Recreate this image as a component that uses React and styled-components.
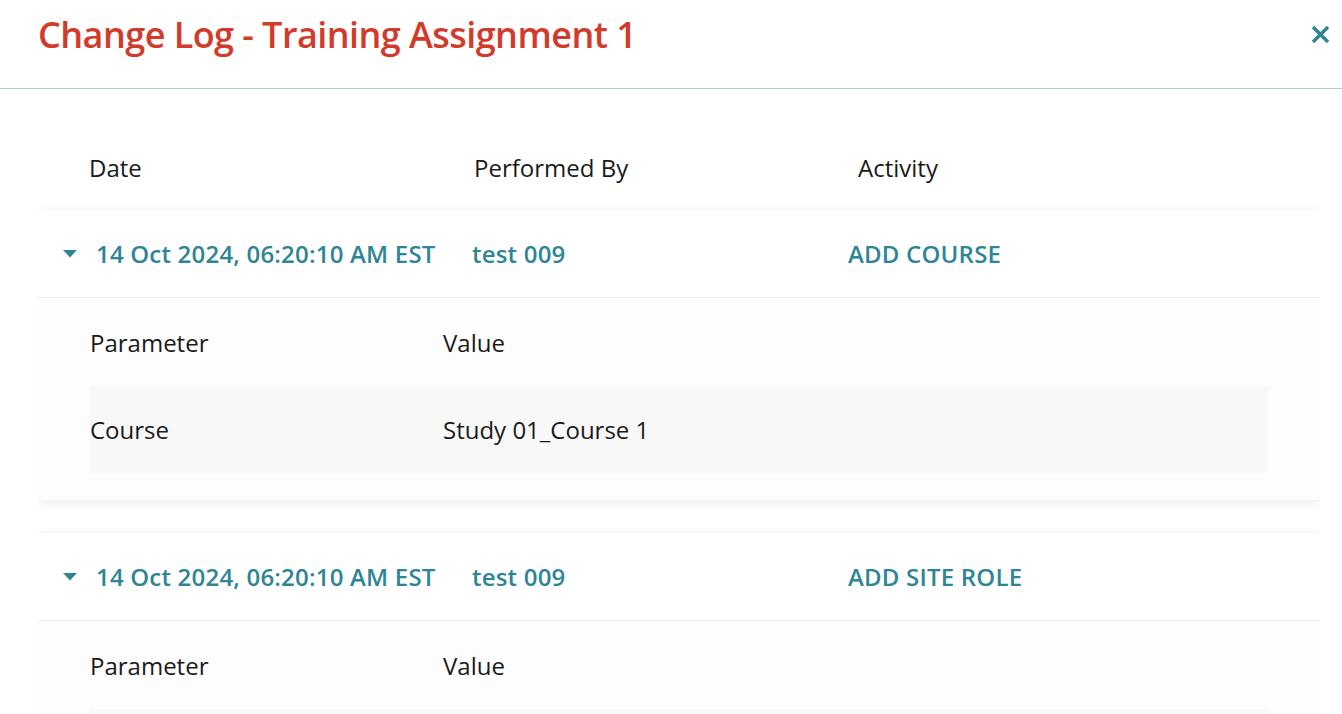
import React from "react";
import styled, { createGlobalStyle } from "styled-components";

const GlobalStyle = createGlobalStyle`
  body {
    margin: 0;
    background: #fff;
    font-family: "Open Sans", "Noto Sans", sans-serif;
    overflow: hidden;
  }
`;

const logs = [
  {
    id: 1,
    date: "14 Oct 2024, 06:20:10 AM EST",
    by: "test 009",
    activity: "ADD COURSE",
    params: [{ name: "Course", value: "Study 01_Course 1" }],
  },
  {
    id: 2,
    date: "14 Oct 2024, 06:20:10 AM EST",
    by: "test 009",
    activity: "ADD SITE ROLE",
    params: [{ name: "Site Role", value: "Site Coordinator" }],
  },
];

const Caret = () => (
  <svg width="14" height="8" viewBox="0 0 14 8">
    <path d="M0 0 L14 0 L7 7.5 Z" fill="currentColor" />
  </svg>
);

const CloseIcon = () => (
  <svg width="19" height="19" viewBox="0 0 19 19">
    <path
      d="M2 2 L17 17 M17 2 L2 17"
      stroke="currentColor"
      strokeWidth="3.4"
      strokeLinecap="butt"
    />
  </svg>
);

const App = () => {
  return (
    <Modal>
      <GlobalStyle />
      <Header>
        <Title>Change Log - Training Assignment 1</Title>
        <CloseButton aria-label="Close">
          <CloseIcon />
        </CloseButton>
      </Header>
      <Body>
        <ColumnHeader>
          <span>Date</span>
          <span>Performed By</span>
          <span>Activity</span>
        </ColumnHeader>
        {logs.map((log) => (
          <LogCard key={log.id}>
            <LogRow>
              <CaretCell>
                <Caret />
              </CaretCell>
              <span>{log.date}</span>
              <span>{log.by}</span>
              <span>{log.activity}</span>
            </LogRow>
            <Details>
              <ParamRow>
                <span>Parameter</span>
                <span>Value</span>
              </ParamRow>
              {log.params.map((p) => (
                <ParamRow key={p.name} $striped>
                  <span>{p.name}</span>
                  <span>{p.value}</span>
                </ParamRow>
              ))}
            </Details>
          </LogCard>
        ))}
      </Body>
    </Modal>
  );
};

const Modal = styled.div`
  width: 1342px;
  height: 714px;
  overflow: hidden;
  background: #fff;
`;

const Header = styled.header`
  display: flex;
  align-items: center;
  justify-content: space-between;
  height: 88px;
  padding: 0 12px 0 38px;
  border-bottom: 1px solid #a4cfd6;
`;

const Title = styled.h1`
  margin: 0 0 18px;
  font-size: 36px;
  line-height: 1.2;
  font-weight: 600;
  color: #d23b2b;
  letter-spacing: -0.55px;
`;

const CloseButton = styled.button`
  display: flex;
  align-items: center;
  justify-content: center;
  width: 19px;
  height: 19px;
  margin-bottom: 20px;
  padding: 0;
  border: none;
  background: none;
  color: #2e8596;
  cursor: pointer;
`;

const Body = styled.div`
  margin: 0 22px 0 38px;
  padding: 35px 0 40px;
  overflow: hidden;
`;

const ColumnHeader = styled.div`
  display: grid;
  grid-template-columns: 385px 384px 1fr;
  align-items: center;
  height: 86px;
  padding-left: 51px;
  font-size: 24px;
  color: #1a1a1a;
`;

const LogCard = styled.section`
  background: #fff;
  box-shadow: 0 2px 10px rgba(0, 0, 0, 0.09);
  margin-bottom: 33px;
`;

const LogRow = styled.div`
  display: grid;
  grid-template-columns: 33px 376px 376px 1fr;
  align-items: center;
  height: 87px;
  padding-left: 25px;
  border-bottom: 1px solid #eeeeee;
  box-shadow: 0 1px 3px rgba(0, 0, 0, 0.03);
  font-size: 24px;
  font-weight: 600;
  letter-spacing: 0.2px;
  color: #2e8596;
`;

const CaretCell = styled.span`
  display: flex;
  align-items: center;
  padding-top: 1px;
`;

const Details = styled.div`
  background: #fdfdfd;
  padding: 0 52px 27px 51px;
`;

const ParamRow = styled.div`
  display: grid;
  grid-template-columns: 353px 1fr;
  align-items: center;
  height: ${(p) => (p.$striped ? "87px" : "88px")};
  padding-left: 1px;
  background: ${(p) => (p.$striped ? "#f8f8f8" : "transparent")};
  font-size: 24px;
  color: #1a1a1a;
`;

export default App;
